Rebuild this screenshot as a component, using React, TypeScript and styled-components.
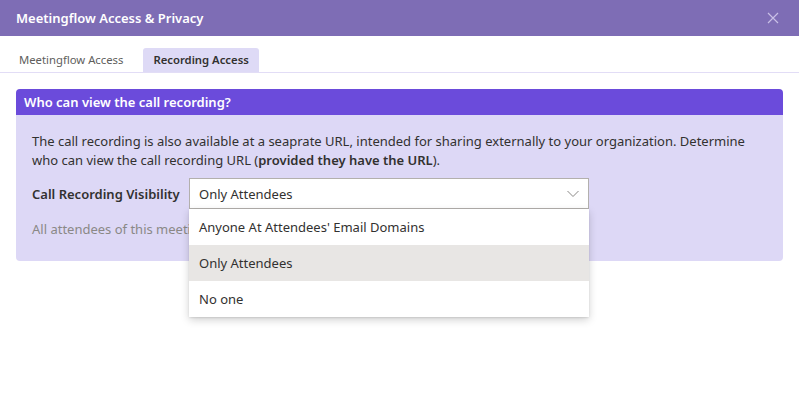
import { FC } from "react";
import styled, { createGlobalStyle } from "styled-components";

const GlobalStyle = createGlobalStyle`
  html, body {
    margin: 0;
    padding: 0;
    background: #fff;
    font-family: "Noto Sans", "Open Sans", sans-serif;
    color: #323130;
  }
`;

const options = ["Anyone At Attendees' Email Domains", "Only Attendees", "No one"];

const App: FC = () => {
  return (
    <>
      <GlobalStyle />
      <SDialog>
        <SHeader>
          <STitle>Meetingflow Access &amp; Privacy</STitle>
          <SClose aria-label="close">
            <svg width="12" height="12" viewBox="0 0 12 12">
              <path d="M1 1 L11 11 M11 1 L1 11" stroke="currentColor" strokeWidth="1.2" />
            </svg>
          </SClose>
        </SHeader>
        <STabs>
          <STab>Meetingflow Access</STab>
          <STab $active>Recording Access</STab>
        </STabs>
        <SSection>
          <SSectionHead>Who can view the call recording?</SSectionHead>
          <SSectionBody>
            <SText>
              The call recording is also available at a seaprate URL, intended for sharing externally to
              your organization. Determine who can view the call recording URL (<b>provided they have the URL</b>).
            </SText>
            <SField>
              <SLabel>Call Recording Visibility</SLabel>
              <SSelectWrap>
                <SSelect>
                  <span>Only Attendees</span>
                  <svg width="12" height="8" viewBox="0 0 12 8">
                    <path d="M0.5 1 L6 6.5 L11.5 1" fill="none" stroke="#8a8886" strokeWidth="1" />
                  </svg>
                </SSelect>
                <SMenu>
                  {options.map((o) => (
                    <SOption key={o} $selected={o === "Only Attendees"}>
                      {o}
                    </SOption>
                  ))}
                </SMenu>
              </SSelectWrap>
            </SField>
            <SHelp>All attendees of this meeting can view the call recording.</SHelp>
          </SSectionBody>
        </SSection>
      </SDialog>
    </>
  );
};

export default App;

const SDialog = styled.div`
  width: 799px;
  height: 399px;
  background: #fff;
`;

const SHeader = styled.div`
  height: 36px;
  background: #7e6db5;
  display: flex;
  align-items: center;
  justify-content: space-between;
  padding: 0 20px 0 16px;
`;

const STitle = styled.h1`
  margin: 0;
  font-size: 13px;
  font-weight: 600;
  color: #fff;
`;

const SClose = styled.div`
  color: #c9c0e6;
  display: flex;
`;

const STabs = styled.div`
  display: flex;
  gap: 10px;
  margin-top: 12px;
  padding: 0 9px;
  border-bottom: 1px solid #e2ddf6;
`;

const STab = styled.div<{ $active?: boolean }>`
  height: 24px;
  line-height: 24px;
  padding: 0 10px;
  font-size: 11.3px;
  border-radius: 3px 3px 0 0;
  color: ${(p) => (p.$active ? "#323130" : "#605e5c")};
  background: ${(p) => (p.$active ? "#dedaf6" : "transparent")};
  font-weight: ${(p) => (p.$active ? 600 : 400)};
`;

const SSection = styled.div`
  margin: 16px 16px 0;
  border-radius: 4px;
`;

const SSectionHead = styled.div`
  height: 26px;
  line-height: 26px;
  padding: 0 8px;
  background: #6b4bdb;
  color: #fff;
  font-size: 13px;
  font-weight: 600;
  border-radius: 4px 4px 0 0;
`;

const SSectionBody = styled.div`
  background: #ddd8f6;
  border-radius: 0 0 4px 4px;
  padding: 17px 16px 23px;
`;

const SText = styled.p`
  margin: 0;
  font-size: 13px;
  line-height: 19px;
  color: #323130;

  b {
    font-weight: 600;
  }
`;

const SField = styled.div`
  display: flex;
  align-items: center;
  margin-top: 8px;
`;

const SLabel = styled.label`
  width: 157px;
  font-size: 13px;
  font-weight: 600;
`;

const SSelectWrap = styled.div`
  position: relative;
  width: 400px;
`;

const SSelect = styled.div`
  height: 31px;
  box-sizing: border-box;
  border: 1px solid #b3b0ad;
  background: #fff;
  display: flex;
  align-items: center;
  justify-content: space-between;
  padding: 0 9px;
  font-size: 13px;
`;

const SMenu = styled.div`
  position: absolute;
  top: 31px;
  left: 0;
  right: 0;
  background: #fff;
  box-shadow: 0 3px 8px rgba(0, 0, 0, 0.18), 0 1px 2px rgba(0, 0, 0, 0.1);
  border-radius: 0 0 2px 2px;
  z-index: 2;
`;

const SOption = styled.div<{ $selected?: boolean }>`
  height: 36px;
  display: flex;
  align-items: center;
  padding: 0 10px;
  font-size: 13px;
  background: ${(p) => (p.$selected ? "#e8e6e4" : "#fff")};
`;

const SHelp = styled.div`
  margin-top: 11px;
  font-size: 13px;
  color: #8a8886;
`;
